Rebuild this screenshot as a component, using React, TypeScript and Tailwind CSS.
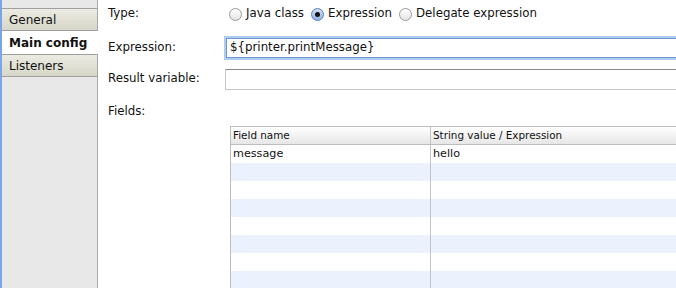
import React from "react";

function Radio({ checked }: { checked?: boolean }) {
  return (
    <div
      className={
        "w-[13px] h-[13px] rounded-full border flex items-center justify-center shrink-0 " +
        (checked
          ? "border-[#5a7fb8] bg-gradient-to-b from-[#cfe0f7] to-[#8fb3e6]"
          : "border-[#9a9a9a] bg-gradient-to-b from-[#ffffff] to-[#e4e4e4]")
      }
    >
      {checked && <div className="w-[5px] h-[5px] rounded-full bg-[#111]" />}
    </div>
  );
}

const rows = [
  ["message", "hello"],
  ["", ""],
  ["", ""],
  ["", ""],
  ["", ""],
  ["", ""],
  ["", ""],
  ["", ""],
];

export default function App() {
  return (
    <div className="w-[676px] h-[288px] flex overflow-hidden bg-white text-[11.8px] text-[#111] font-['DejaVu_Sans',sans-serif]">
      <div className="w-[98px] shrink-0 flex bg-[#e8e8e8] border-r border-[#a8a8a8] text-[12px]">
        <div className="w-[2px] bg-[#78a5ec]" />
        <div className="flex-1 pt-[8px] flex flex-col">
          <div className="h-[23px] shrink-0 flex items-center pl-[7px] border-y border-[#a0a0a0] bg-gradient-to-b from-[#ebebe2] to-[#d6d6c8]">
            General
          </div>
          <div className="h-[23px] shrink-0 flex items-center pl-[7px] bg-white font-bold mr-[-1px] relative">
            Main config
          </div>
          <div className="h-[23px] shrink-0 flex items-center pl-[7px] border-y border-[#a0a0a0] bg-gradient-to-b from-[#ebebe2] to-[#d6d6c8]">
            Listeners
          </div>
        </div>
      </div>

      <div className="flex-1 flex flex-col pl-[10px] min-w-0 overflow-hidden">
        <div className="h-[28px] shrink-0 flex items-center">
          <div className="w-[120px] shrink-0">Type:</div>
          <div className="flex items-center ml-[1px]">
            <Radio />
            <span className="ml-[4px]">Java class</span>
            <span className="w-[7px]" />
            <Radio checked />
            <span className="ml-[4px]">Expression</span>
            <span className="w-[7px]" />
            <Radio />
            <span className="ml-[4px]">Delegate expression</span>
          </div>
        </div>

        <div className="h-[22px] shrink-0 mt-[9px] flex items-center">
          <div className="w-[117px] shrink-0">Expression:</div>
          <div className="flex-1 h-[20px] ml-[1px] border border-[#6f98d2] shadow-[0_0_0_2px_#aecbf0] flex items-center pl-[3px] mr-[-10px]">
            {"${printer.printMessage}"}
          </div>
        </div>

        <div className="h-[22px] shrink-0 mt-[9px] flex items-center">
          <div className="w-[117px] shrink-0">Result variable:</div>
          <div className="flex-1 h-[21px] border border-[#c6c6c6] border-t-[#8a8a8a] mr-[-10px]" />
        </div>

        <div className="h-[18px] shrink-0 mt-[13px] flex items-center">Fields:</div>

        <div className="shrink-0 mt-[5px] ml-[122px] mr-[-10px] border-l border-t border-[#bdbdbd]">
          <div className="h-[18px] flex text-[10.4px] bg-gradient-to-b from-[#ffffff] to-[#e6e6e6] border-b border-[#bdbdbd]">
            <div className="w-[200px] shrink-0 pl-[2px] flex items-center border-r border-[#c4c4c4]">
              Field name
            </div>
            <div className="flex-1 pl-[2px] flex items-center">String value / Expression</div>
          </div>
          {rows.map((r, i) => (
            <div
              key={i}
              className={"h-[18px] flex text-[11.2px] " + (i % 2 === 0 ? "bg-white" : "bg-[#ecf2fd]")}
            >
              <div className="w-[200px] shrink-0 pl-[2px] flex items-center border-r border-[#c4c4c4]">
                {r[0]}
              </div>
              <div className="flex-1 pl-[2px] flex items-center">{r[1]}</div>
            </div>
          ))}
        </div>
      </div>
    </div>
  );
}
